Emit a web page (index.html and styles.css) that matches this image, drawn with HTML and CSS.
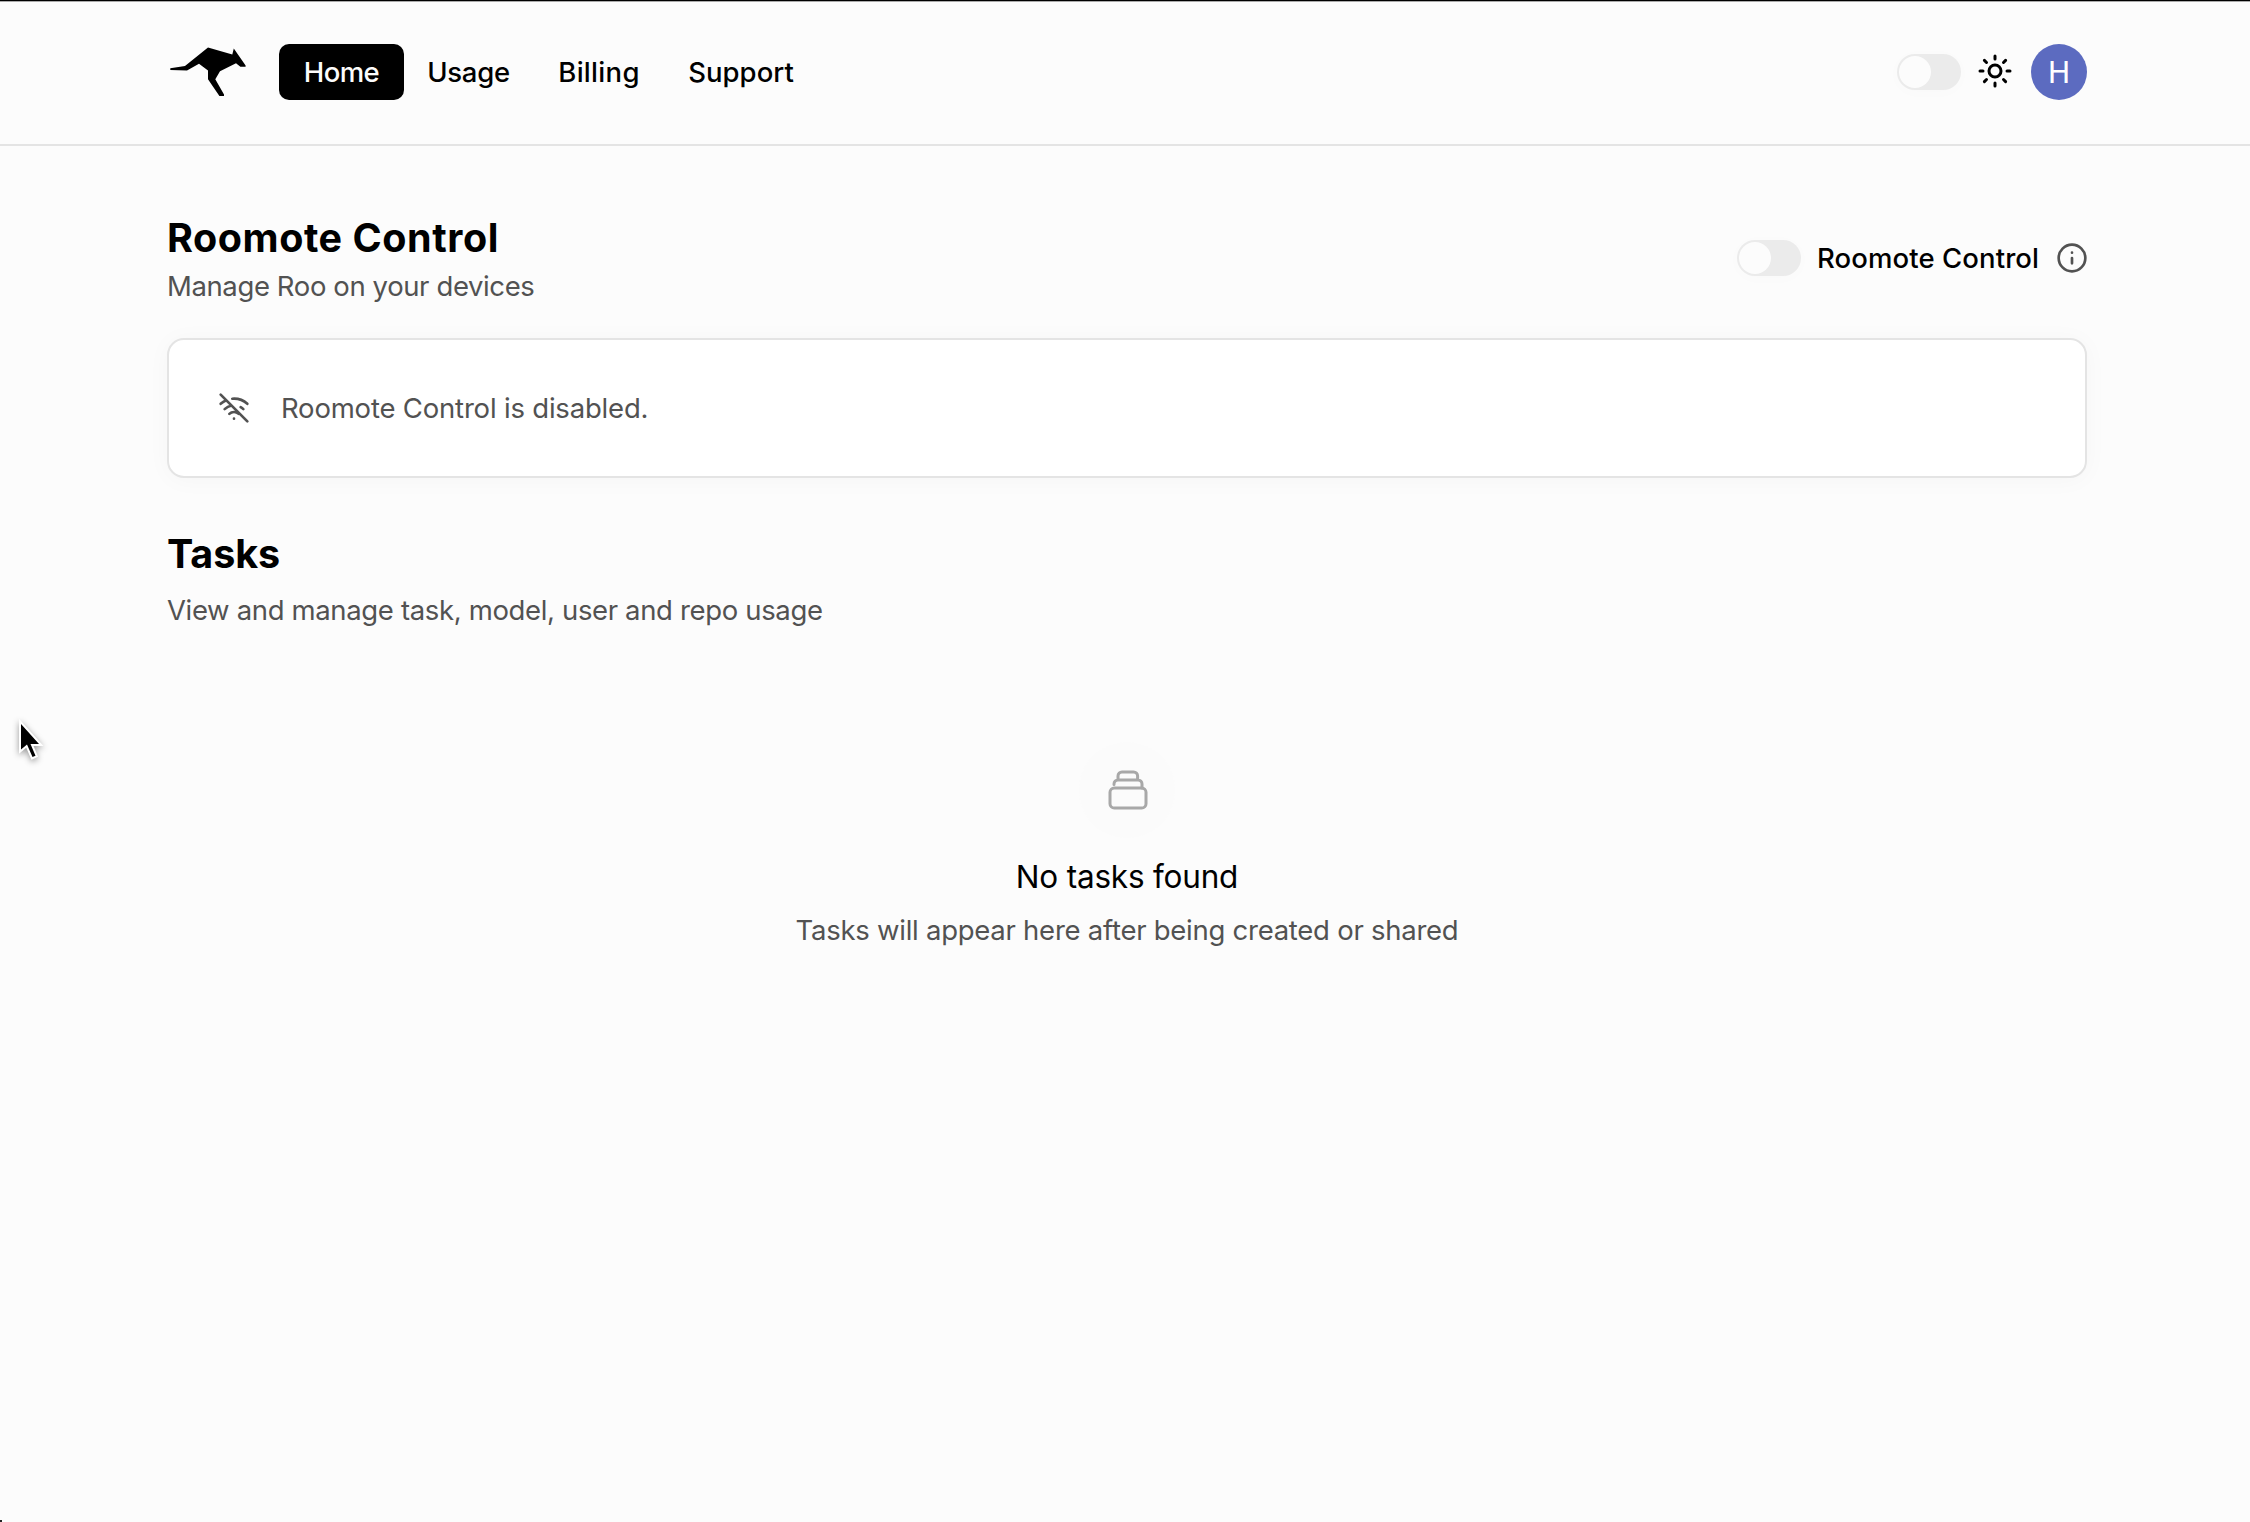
FILE: index.html
```html
<!DOCTYPE html>
<html lang="en">
<head>
<meta charset="utf-8">
<title>Roomote Control</title>
<link rel="stylesheet" href="styles.css">
</head>
<body>
<header class="header">
  <svg class="logo" viewBox="7 0 84 64" aria-label="Roo"><path d="M10.3 28.3 25 26 48 7.4 72.3 14.5 73.8 8.4 85.6 25.4V26.8H80.4L76 23.3 60 31.2 55.3 39.3 64 54.4V55.9H59.4L48 39.2V30.5L39 23.7 27 30.4 10.3 30Z"/></svg>
  <nav class="nav">
    <a class="nav-item nav-home">Home</a>
    <a class="nav-item nav-usage">Usage</a>
    <a class="nav-item nav-billing">Billing</a>
    <a class="nav-item nav-support">Support</a>
  </nav>
  <div class="header-tools">
    <span class="toggle"></span>
    <svg class="sun" viewBox="0 0 24 24"><circle cx="12" cy="12" r="4"/><path d="M12 2v2M12 20v2M4.93 4.93l1.41 1.41M17.66 17.66l1.41 1.41M2 12h2M20 12h2M6.34 17.66l-1.41 1.41M19.07 4.93l-1.41 1.41"/></svg>
    <span class="avatar">H</span>
  </div>
</header>
<main class="main">
  <section class="intro">
    <div>
      <h1 class="title title-control">Roomote Control</h1>
      <p class="text text-manage">Manage Roo on your devices</p>
    </div>
    <div class="control">
      <span class="toggle"></span>
      <span class="control-label">Roomote Control</span>
      <svg class="info" viewBox="0 0 24 24"><circle cx="12" cy="12" r="10"/><path d="M12 16v-4M12 8h.01"/></svg>
    </div>
  </section>
  <section class="card">
    <svg class="wifi" viewBox="0 0 24 24"><path d="M12 20h.01M8.5 16.429a5 5 0 0 1 7 0M5 12.859a10 10 0 0 1 5.17-2.69M19 12.859a10 10 0 0 0-2.007-1.523M2 8.82a15 15 0 0 1 4.177-2.643M22 8.82a15 15 0 0 0-11.288-3.764M2 2l20 20"/></svg>
    <p class="text text-disabled">Roomote Control is disabled.</p>
  </section>
  <section class="tasks">
    <h2 class="title title-tasks">Tasks</h2>
    <p class="text text-view">View and manage task, model, user and repo usage</p>
  </section>
  <section class="empty">
    <div class="empty-icon">
      <svg class="stack" viewBox="0 0 48 48"><rect x="6" y="22" width="36" height="20" rx="4.3"/><path d="M10 18.6V18a4 4 0 0 1 4-4h20a4 4 0 0 1 4 4v4M14 14v-4a4 4 0 0 1 4-4h11.6a4 4 0 0 1 4 4v4"/></svg>
    </div>
    <h3 class="empty-title">No tasks found</h3>
    <p class="text text-empty">Tasks will appear here after being created or shared</p>
  </section>
</main>
<svg class="cursor" viewBox="0 0 48 56"><path d="M11 11V36.500L17 31.500 22.500 44 25.500 42.700 20.500 31H29Z"/></svg>
<span class="corner"></span>
</body>
</html>
```
FILE: styles.css
```css
* { box-sizing: border-box; }
body {
  margin: 0;
  width: 2250px;
  height: 1522px;
  overflow: hidden;
  background: #fcfcfc;
  color: #000;
  font: 400 27.5px/40px Inter, sans-serif;
}
h1, h2, h3, p { margin: 0; }
svg { flex: none; display: block; fill: none; stroke: currentColor; stroke-width: 2; stroke-linecap: round; stroke-linejoin: round; }

.header {
  display: flex;
  align-items: center;
  height: 146px;
  padding: 0 163px 0 167px;
  border-bottom: 2px solid #e4e4e4;
  box-shadow: inset 0 1px #000, inset 0 2px #aaa;
}
.logo { width: 84px; height: 64px; fill: #000; stroke: none; }
.nav { display: flex; margin-left: 28px; font-weight: 500; }
.nav-item { height: 56px; line-height: 56px; text-align: center; white-space: nowrap; }
.nav-home { width: 125px; border-radius: 10px; background: #000; color: #fcfcfc; letter-spacing: -.6px; }
.nav-usage { width: 129px; letter-spacing: -.25px; }
.nav-billing { width: 132px; letter-spacing: .3px; }
.nav-support { width: 152px; letter-spacing: .05px; }
.header-tools { display: flex; align-items: center; gap: 16px; margin-left: auto; }
.sun { width: 36px; height: 36px; margin-bottom: 2px; }
.avatar {
  width: 56px;
  height: 56px;
  margin-left: 2px;
  border-radius: 50%;
  background: #5c6bc0;
  color: #fff;
  font: 400 31px/57px Roboto, sans-serif;
  text-align: center;
}
.toggle {
  flex: none;
  display: flex;
  width: 64px;
  height: 36px;
  padding: 2px;
  border-radius: 18px;
  background: #ebebeb;
  box-shadow: 0 2px 16px rgba(0, 0, 0, .015);
}
.toggle::before { content: ""; width: 32px; height: 32px; border-radius: 50%; background: #fcfcfc; }

.main { width: 1920px; margin-left: 167px; padding-top: 64px; }
.intro { display: flex; justify-content: space-between; align-items: center; }
.title { font-size: 39.5px; line-height: 56px; font-weight: 700; }
.title-control { letter-spacing: .55px; }
.title-tasks { letter-spacing: -.1px; }
.text { color: #525252; white-space: nowrap; }
.text-manage { letter-spacing: -.39px; }
.text-disabled { letter-spacing: -.19px; }
.text-view { margin-top: 8px; letter-spacing: -.35px; }
.text-empty { margin-top: 11px; letter-spacing: -.26px; }
.control { display: flex; align-items: center; gap: 15px; margin-right: -1px; }
.control-label { width: 225px; padding-left: 1px; font-weight: 500; letter-spacing: .1px; white-space: nowrap; }
.info, .wifi { width: 32px; height: 32px; color: #525252; }
.card {
  display: flex;
  align-items: center;
  gap: 31px;
  height: 140px;
  margin-top: 32px;
  padding-left: 49px;
  border: 2px solid #e4e4e4;
  border-radius: 17px;
  background: #fff;
  box-shadow: 0 2px 24px rgba(0, 0, 0, .03);
}
.tasks { margin-top: 48px; }
.empty { display: flex; flex-direction: column; align-items: center; margin-top: 112px; }
.empty-icon { display: flex; align-items: center; justify-content: center; width: 96px; height: 96px; padding-left: 2px; border-radius: 50%; background: #fbfbfb; }
.stack { width: 48px; height: 48px; color: #a8a8a8; stroke-width: 3; }
.empty-title { margin-top: 17px; font-size: 31.5px; line-height: 44px; font-weight: 400; letter-spacing: -.2px; }

.cursor {
  position: absolute;
  left: 10px;
  top: 713px;
  width: 48px;
  height: 56px;
  fill: #000;
  stroke: #fff;
  stroke-width: 4;
  stroke-linejoin: miter;
  paint-order: stroke;
  filter: drop-shadow(0 2px 3px rgba(0, 0, 0, .4));
}
.corner { position: absolute; left: 0; top: 1520px; width: 2px; height: 2px; background: #222; }
```
